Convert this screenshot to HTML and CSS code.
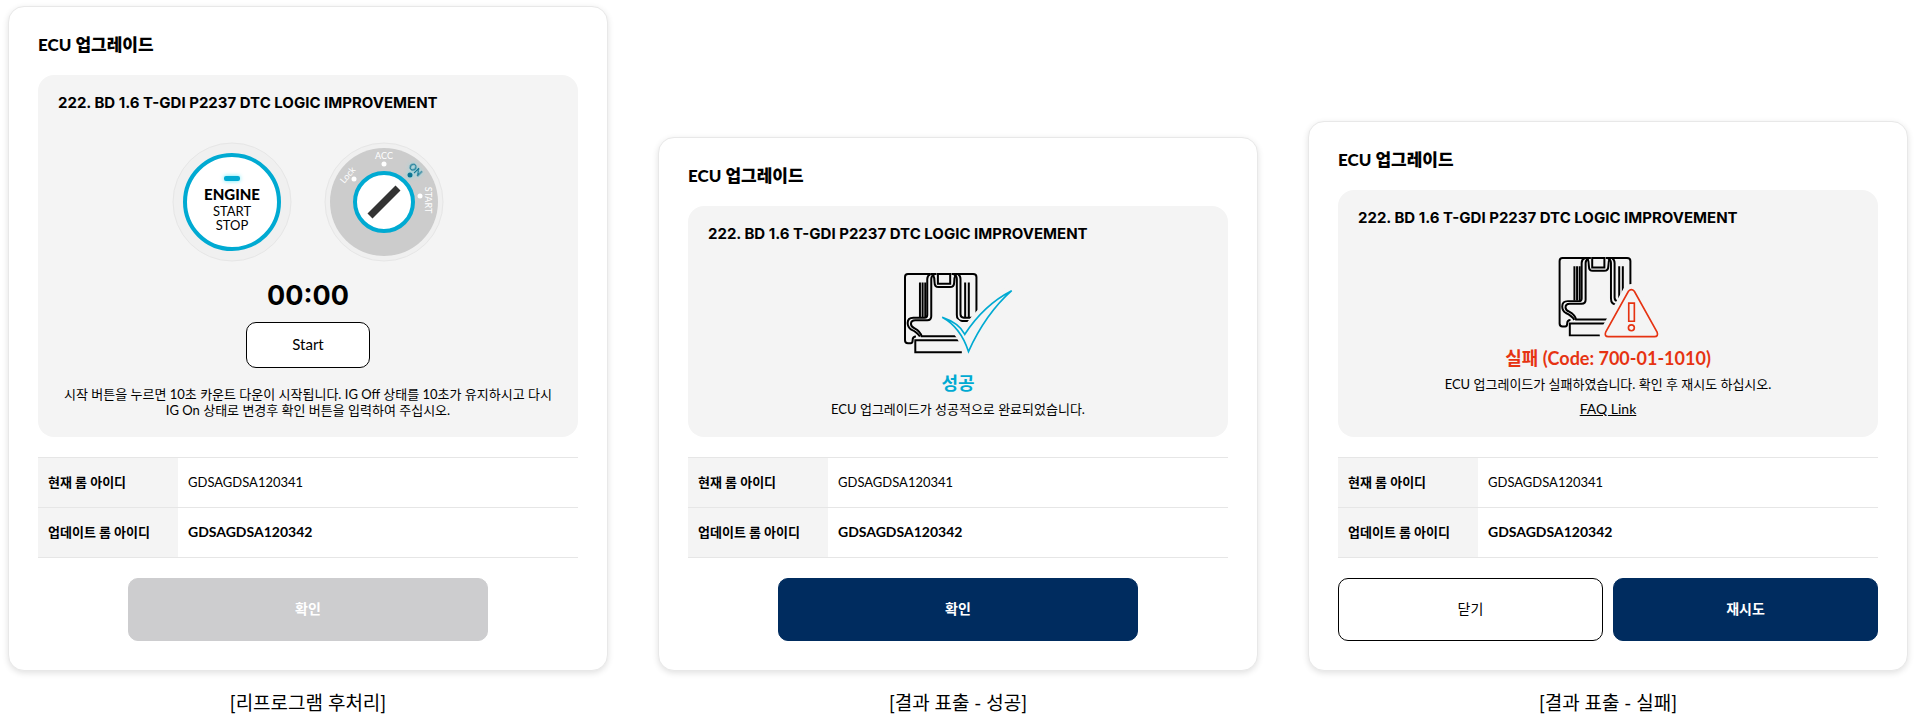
FILE: index.html
```
<!DOCTYPE html>
<html lang="ko">
<head>
  <meta charset="utf-8">
  <title>ECU 업그레이드</title>
  <link rel="stylesheet" href="styles.css">
</head>
<body>
<svg class="defs" width="0" height="0" aria-hidden="true">
  <symbol id="seat" viewBox="0 0 340 246" overflow="visible">
    <g fill="none" stroke="#000" stroke-width="6">
      <path d="M80 3H12Q3 3 3 12V202Q3 211 12 211H20Q26 211 26 202Q26 191 36 191"/>
      <path d="M80 3Q70 7 70 18V126Q70 134 62 134H28Q11 134 11 150Q11 163 22 170Q40 178 48 191"/>
      <path d="M91 4Q82 8 82 18V130Q82 142 70 142H34Q21 142 21 153Q21 161 32 166Q50 176 53 190H200"/>
      <path d="M87 4Q92 12 92 28Q92 42 104 42H138Q151 42 151 28Q151 12 156 4"/>
      <path d="M102 3H139V32H102Z"/>
      <path d="M80 3H98M143 3H208Q218 3 218 12V200"/>
      <path d="M150 4Q159 8 159 18V126Q159 144 176 144H210"/>
      <path d="M163 4Q170 8 170 18V124Q170 134 180 134H210"/>
      <path d="M48 28V132M56 28V132M64 28V132M184 28V132M195 28V132"/>
      <path d="M190 202H34V238H174"/>
    </g>
  </symbol>
</svg>

<main class="screens">
  <section class="screen">
    <div class="card">
      <h1 class="card-title">ECU 업그레이드</h1>
      <div class="panel">
        <h2 class="panel-title">222. BD 1.6 T-GDI P2237 DTC LOGIC IMPROVEMENT</h2>
        <div class="dials">
          <svg class="dial" viewBox="0 0 120 120" role="img" aria-label="ENGINE START STOP">
            <circle cx="60" cy="60" r="59" fill="#f0f0f0" stroke="#e6e6e6"/>
            <circle cx="60" cy="60" r="47" fill="#fff" stroke="#00aad2" stroke-width="4"/>
            <rect class="glow" x="52" y="34" width="16" height="5" rx="2" fill="#00aad2"/>
            <text class="dial-main" x="60" y="58">ENGINE</text>
            <text class="dial-sub" x="60" y="74">START</text>
            <text class="dial-sub" x="60" y="88">STOP</text>
          </svg>
          <svg class="dial" viewBox="0 0 120 120" role="img" aria-label="Lock ACC ON START">
            <circle cx="60" cy="60" r="59" fill="#f0f0f0" stroke="#e6e6e6"/>
            <circle cx="60" cy="60" r="54" fill="#ccc"/>
            <circle cx="60" cy="60" r="29" fill="#fff" stroke="#00aad2" stroke-width="4"/>
            <path d="M46 74L74 46" stroke="#333" stroke-width="7"/>
            <g fill="#fff">
              <circle cx="30" cy="37" r="2.5"/>
              <circle cx="60" cy="22" r="2.5"/>
              <circle cx="96" cy="54" r="2.5"/>
            </g>
            <circle class="glow" cx="86" cy="33" r="2.5" fill="#0a7391"/>
            <text class="dial-mark" x="60" y="17">ACC</text>
            <text class="dial-mark" transform="translate(26 35) rotate(-50)">Lock</text>
            <text class="dial-mark on" transform="translate(89 30) rotate(45)">ON</text>
            <text class="dial-mark" transform="translate(101 58) rotate(90)">START</text>
          </svg>
        </div>
        <div class="timer">00:00</div>
        <button type="button" class="btn-start">Start</button>
        <p class="guide">시작 버튼을 누르면 10초 카운트 다운이 시작됩니다. IG Off 상태를 10초가 유지하시고 다시 IG On 상태로 변경후 확인 버튼을 입력하여 주십시오.</p>
      </div>
      <table class="info">
        <tr><th scope="row">현재 롬 아이디</th><td>GDSAGDSA120341</td></tr>
        <tr><th scope="row">업데이트 롬 아이디</th><td class="strong">GDSAGDSA120342</td></tr>
      </table>
      <div class="buttons">
        <button type="button" class="btn single" disabled>확인</button>
      </div>
    </div>
    <p class="caption">[리프로그램 후처리]</p>
  </section>

  <section class="screen">
    <div class="card">
      <h1 class="card-title">ECU 업그레이드</h1>
      <div class="panel">
        <h2 class="panel-title">222. BD 1.6 T-GDI P2237 DTC LOGIC IMPROVEMENT</h2>
        <svg class="result-icon success" viewBox="0 0 328 243" aria-hidden="true">
          <use href="#seat" width="340" height="246"/>
          <path d="M115 133Q165 150 183 184Q240 96 324 53Q246 122 194 236Q170 163 115 133Z" fill="#f4f4f4" stroke="#f4f4f4" stroke-width="30"/>
          <path d="M115 133Q165 150 183 184Q240 96 324 53Q246 122 194 236Q170 163 115 133Z" fill="none" stroke="#00aad2" stroke-width="5"/>
        </svg>
        <strong class="result success">성공</strong>
        <p class="desc">ECU 업그레이드가 성공적으로 완료되었습니다.</p>
      </div>
      <table class="info">
        <tr><th scope="row">현재 롬 아이디</th><td>GDSAGDSA120341</td></tr>
        <tr><th scope="row">업데이트 롬 아이디</th><td class="strong">GDSAGDSA120342</td></tr>
      </table>
      <div class="buttons">
        <button type="button" class="btn single">확인</button>
      </div>
    </div>
    <p class="caption">[결과 표출 - 성공]</p>
  </section>

  <section class="screen">
    <div class="card">
      <h1 class="card-title">ECU 업그레이드</h1>
      <div class="panel">
        <h2 class="panel-title">222. BD 1.6 T-GDI P2237 DTC LOGIC IMPROVEMENT</h2>
        <svg class="result-icon fail" viewBox="0 0 303 246" aria-hidden="true">
          <use href="#seat" width="340" height="246"/>
          <path d="M212 104Q221 94 230 104L299 228Q304 242 291 242H151Q138 242 143 228Z" fill="#f4f4f4" stroke="#f4f4f4" stroke-width="34"/>
          <g fill="none" stroke="#e63312" stroke-width="5">
            <path d="M212 104Q221 94 230 104L299 228Q304 242 291 242H151Q138 242 143 228Z"/>
            <path d="M213 195V140H230V195Z"/>
            <circle cx="221" cy="215" r="9"/>
          </g>
        </svg>
        <strong class="result fail">실패 (Code: 700-01-1010)</strong>
        <p class="desc">ECU 업그레이드가 실패하였습니다. 확인 후 재시도 하십시오.</p>
        <a class="faq" href="#">FAQ Link</a>
      </div>
      <table class="info">
        <tr><th scope="row">현재 롬 아이디</th><td>GDSAGDSA120341</td></tr>
        <tr><th scope="row">업데이트 롬 아이디</th><td class="strong">GDSAGDSA120342</td></tr>
      </table>
      <div class="buttons">
        <button type="button" class="btn line">닫기</button>
        <button type="button" class="btn">재시도</button>
      </div>
    </div>
    <p class="caption">[결과 표출 - 실패]</p>
  </section>
</main>
</body>
</html>
```
FILE: styles.css
```
* {
  box-sizing: border-box;
}
body {
  margin: 0;
  padding: 6px 8px 0;
  background: #fff;
  color: #000;
  font-family: Lato, "Noto Sans CJK KR", sans-serif;
  font-size: 13px;
}
h1, h2, p {
  margin: 0;
}
button {
  font-family: inherit;
  cursor: pointer;
}
.defs {
  display: block;
}
.screens {
  display: flex;
  align-items: flex-end;
  gap: 50px;
}
.screen {
  flex: 1;
  min-width: 0;
}
.card {
  padding: 28px 29px 29px;
  border: 1px solid #e8e8e8;
  border-radius: 16px;
  background: #fff;
  box-shadow: 0 2px 6px rgba(0, 0, 0, 0.12);
}
.card-title {
  margin-bottom: 20px;
  font-size: 17px;
  font-weight: 900;
  line-height: 20px;
}
.panel {
  display: flex;
  flex-direction: column;
  align-items: center;
  margin-bottom: 20px;
  padding: 20px 20px 19px;
  border-radius: 16px;
  background: #f4f4f4;
}
.panel-title {
  align-self: stretch;
  font-family: Inter, sans-serif;
  font-size: 15px;
  font-weight: 700;
  line-height: 16px;
}

/* engine button + key dial */
.dials {
  display: flex;
  gap: 32px;
  margin-top: 31px;
}
.dial {
  width: 120px;
  height: 120px;
}
.dial text {
  text-anchor: middle;
}
.dial-main {
  font-size: 15px;
  font-weight: 900;
}
.dial-sub {
  font-size: 13px;
}
.dial .dial-mark {
  font-size: 9px;
  fill: #fff;
}
.dial .on {
  font-weight: 700;
  fill: #0a7391;
  filter: drop-shadow(0 0 2px #6fe3f5);
}
.glow {
  filter: drop-shadow(0 0 2px #5ce6f5);
}

.timer {
  margin-top: 20px;
  font-family: Inter, sans-serif;
  font-size: 27px;
  font-weight: 700;
  line-height: 28px;
}
.btn-start {
  width: 124px;
  height: 46px;
  margin-top: 12px;
  padding-bottom: 3px;
  border: 1px solid #000;
  border-radius: 10px;
  background: #fff;
  color: #000;
  font-size: 15px;
}
.guide {
  margin-top: 18px;
  line-height: 16px;
  text-align: center;
}

/* result */
.result-icon {
  height: 81px;
  margin-top: 31px;
}
.result-icon.success {
  width: 109px;
}
.result-icon.fail {
  width: 101px;
}
.result {
  font-size: 18px;
  line-height: 20px;
}
.result.success {
  margin-top: 19px;
  color: #00aad2;
}
.result.fail {
  margin-top: 10px;
  color: #e63312;
}
.desc {
  margin-top: 7px;
  line-height: 18px;
}
.faq {
  margin-top: 7px;
  color: #000;
  font-size: 14px;
  line-height: 18px;
}

.info {
  width: 100%;
  margin-bottom: 20px;
  border-collapse: collapse;
}
.info th, .info td {
  height: 50px;
  padding: 0 10px 2px;
  border-top: 1px solid #e6e6e6;
  border-bottom: 1px solid #e6e6e6;
  text-align: left;
}
.info th {
  width: 140px;
  background: #f4f4f4;
}
.info .strong {
  font-size: 14px;
  font-weight: 700;
}

.buttons {
  display: flex;
  justify-content: center;
  gap: 10px;
}
.btn {
  flex: 1;
  height: 63px;
  padding-bottom: 4px;
  border: 1px solid #002c5f;
  border-radius: 10px;
  background: #002c5f;
  color: #fff;
  font-size: 14px;
  font-weight: 700;
}
.btn.single {
  flex: 0 0 360px;
}
.btn:disabled {
  border-color: #cdcdcf;
  background: #cdcdcf;
  cursor: default;
}
.btn.line {
  border-color: #000;
  background: #fff;
  color: #000;
  font-weight: 400;
}
.caption {
  margin-top: 20px;
  font-size: 19px;
  line-height: 24px;
  text-align: center;
}
```
